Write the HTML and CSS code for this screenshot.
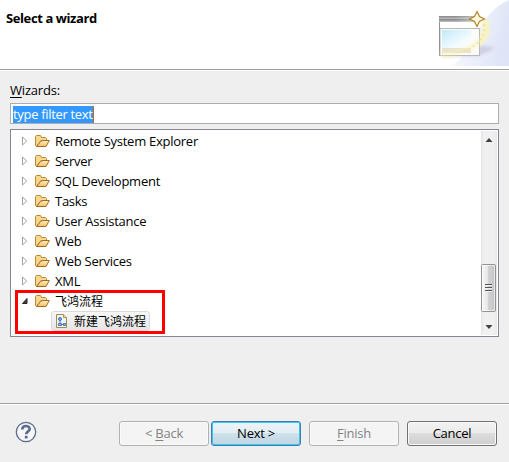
FILE: index.html
```
<!DOCTYPE html>
<html lang="en">
<head>
<meta charset="utf-8">
<title>Select a wizard</title>
<link rel="stylesheet" href="styles.css">
</head>
<body>
<svg class="defs" width="0" height="0" aria-hidden="true">
  <defs>
    <linearGradient id="fold" x1="0" y1="0" x2="0" y2="1"><stop offset="0" stop-color="#fff0c4"/><stop offset="1" stop-color="#f3c068"/></linearGradient>
    <symbol id="folder" viewBox="0 0 16 16">
      <path d="M1.500 12.500V3.500L2.500 2.500H6.500L7.500 4.500H11.500L12.500 5.500V7.500H7L2.500 13.500Z" fill="#f8d88f" stroke="#b98635"/>
      <path d="M2.500 13.500L6.500 8.500L9 7.500H15.300L12 13.500Z" fill="url(#fold)" stroke="#a66b22" stroke-linejoin="round"/>
    </symbol>
    <symbol id="closed" viewBox="0 0 6 10"><path d="M.5 1V9L4.700 5Z" fill="#fff" stroke="#a0a0a0"/></symbol>
  </defs>
</svg>
<header class="banner">
  <h1>Select a wizard</h1>
  <svg class="art" width="100" height="66" viewBox="0 0 100 66">
    <defs>
      <linearGradient id="sweep" x1="0" y1="0" x2="1" y2=".3"><stop offset="0" stop-color="#fff"/><stop offset=".55" stop-color="#eef1fb"/><stop offset="1" stop-color="#dfe5f7"/></linearGradient>
      <linearGradient id="bar" x1="0" y1="0" x2="0" y2="1"><stop offset="0" stop-color="#858585"/><stop offset=".45" stop-color="#b9b9b9"/><stop offset=".6" stop-color="#858585"/><stop offset="1" stop-color="#c5c5c5"/></linearGradient>
      <linearGradient id="fade" x1="0" y1="0" x2="1" y2="0"><stop offset=".4" stop-color="#fff" stop-opacity="0"/><stop offset="1" stop-color="#fff" stop-opacity=".5"/></linearGradient>
      <linearGradient id="sky" x1="0" y1="0" x2="1" y2="1"><stop offset="0" stop-color="#bfeafa"/><stop offset=".65" stop-color="#f2fbfe"/><stop offset="1" stop-color="#fff"/></linearGradient>
      <filter id="soft" x="-20%" y="-20%" width="140%" height="140%"><feGaussianBlur stdDeviation="1.500"/></filter>
    </defs>
    <path d="M42 66C64 55 68 13 100 0V66Z" fill="url(#sweep)"/>
    <path d="M30 57L71 56L86 48L74 45Z" fill="#bbb5cf" opacity=".5" filter="url(#soft)"/>
    <path d="M75 20C83 34 68 53 33 54" fill="none" stroke="#fbf6bd" stroke-width="7" opacity=".8" filter="url(#soft)"/>
    <rect x="30" y="16" width="41" height="40" fill="#fff"/>
    <rect x="30" y="16" width="41" height="6" fill="url(#bar)"/>
    <rect x="30" y="16" width="41" height="6" fill="url(#fade)"/>
    <rect x="31" y="28.500" width="39.500" height="27" fill="#fbfcf8" stroke="#b7b9b8"/>
    <path d="M30.500 22V56" stroke="#8e9296"/>
    <rect x="33" y="30" width="29" height="18" fill="url(#sky)"/>
    <rect x="33" y="48" width="29" height="5" fill="#e5e1d2"/>
    <path d="M76 22C82 36 68 51 31 54" fill="none" stroke="#f8f1b8" stroke-width="5" opacity=".5" filter="url(#soft)"/>
    <path d="M75 24C77 37 69 48 49 52" fill="none" stroke="#f7e2a0" stroke-width="2" stroke-dasharray="2 3"/>
    <path d="M68 11.500L70.500 16.500L75.500 19L70.500 21.500L68 26.500L65.500 21.500L60.500 19L65.500 16.500Z" fill="#fff9dc" stroke="#b5822b" stroke-width="1.200"/>
  </svg>
</header>
<main class="content">
  <label class="label" for="filter"><u>W</u>izards:</label>
  <div class="filter" id="filter"><span class="selected">type filter text</span></div>
  <div class="tree">
    <ul class="rows">
      <li><svg class="twist"><use href="#closed"/></svg><svg class="ico"><use href="#folder"/></svg><span>Remote System Explorer</span></li>
      <li><svg class="twist"><use href="#closed"/></svg><svg class="ico"><use href="#folder"/></svg><span>Server</span></li>
      <li><svg class="twist"><use href="#closed"/></svg><svg class="ico"><use href="#folder"/></svg><span>SQL Development</span></li>
      <li><svg class="twist"><use href="#closed"/></svg><svg class="ico"><use href="#folder"/></svg><span>Tasks</span></li>
      <li><svg class="twist"><use href="#closed"/></svg><svg class="ico"><use href="#folder"/></svg><span>User Assistance</span></li>
      <li><svg class="twist"><use href="#closed"/></svg><svg class="ico"><use href="#folder"/></svg><span>Web</span></li>
      <li><svg class="twist"><use href="#closed"/></svg><svg class="ico"><use href="#folder"/></svg><span>Web Services</span></li>
      <li><svg class="twist"><use href="#closed"/></svg><svg class="ico"><use href="#folder"/></svg><span>XML</span></li>
      <li><svg class="twist" viewBox="0 0 6 10"><path d="M5 2.500V7.500H.5Z" fill="#404040" stroke="#262626"/></svg><svg class="ico"><use href="#folder"/></svg><span class="cjk">飞鸿流程</span></li>
      <li class="child"><div class="pick">
        <svg class="doc" width="16" height="16" viewBox="0 0 16 16">
          <path d="M1.500 1.500H8.500L11.500 4.500V14.500H1.500Z" fill="#edf3fd" stroke="#a58c4d"/>
          <path d="M8.500 1.500V4.500H11.500" fill="#f4dfa4" stroke="#b5934b"/>
          <path d="M5 7V11.500H8" fill="none" stroke="#4a73b0"/>
          <circle cx="5" cy="6" r="1.500" fill="#85a9dc" stroke="#4a73b0"/>
          <path d="M3.500 10.500H6.500V12.500H3.500ZM8.500 10.500H10.500V12.500H8.500Z" fill="#a9c4eb" stroke="#4a73b0"/>
        </svg><span class="cjk">新建飞鸿流程</span></div></li>
    </ul>
    <div class="scroll">
      <svg width="16" height="204" viewBox="0 0 16 204">
        <defs><linearGradient id="thumb"><stop offset="0" stop-color="#fafafa"/><stop offset=".45" stop-color="#e6e6e8"/><stop offset=".5" stop-color="#d2d2d6"/><stop offset="1" stop-color="#c1c1c7"/></linearGradient></defs>
        <path d="M8 7L11.500 11H4.500Z" fill="#404040"/>
        <rect x=".5" y="133.500" width="14" height="47" rx="1" fill="url(#thumb)" stroke="#939393"/>
        <rect x="1.500" y="134.500" width="12" height="45" fill="none" stroke="#fff" opacity=".6"/>
        <path d="M4 153.500H11M4 156.500H11M4 159.500H11" stroke="#555"/>
        <path d="M4 154.500H11M4 157.500H11M4 160.500H11" stroke="#f0f0f0"/>
        <path d="M4.500 194H11.500L8 198Z" fill="#404040"/>
      </svg>
    </div>
    <div class="highlight"></div>
  </div>
</main>
<footer class="footer">
  <svg class="help" width="22" height="22" viewBox="0 0 22 22">
    <circle cx="11" cy="11" r="9.700" fill="#f6f6f7" stroke="#5c6c8c" stroke-width="1.300"/>
    <path d="M7.300 8.500C7.300 3.800 14.700 4 14.700 8C14.700 10.500 11.200 10.300 11.200 13.300" fill="none" stroke="#5b6d91" stroke-width="2.700"/>
    <rect x="9.700" y="14.800" width="3" height="2.800" rx="1" fill="#5b6d91"/>
  </svg>
  <div class="buttons">
    <button class="btn off back" disabled><span>&lt; <u>B</u>ack</span></button>
    <button class="btn next"><span>Next &gt;</span></button>
    <button class="btn off finish" disabled><span><u>F</u>inish</span></button>
    <button class="btn cancel"><span>Cancel</span></button>
  </div>
</footer>
</body>
</html>
```
FILE: styles.css
```
* { box-sizing: border-box; }
body { margin: 0; width: 509px; height: 462px; overflow: hidden; display: flex; flex-direction: column; background: #efefef; color: #000; font: 13px/20px "Open Sans", "Noto Sans CJK SC", sans-serif; letter-spacing: -.26px; }
.defs { position: absolute; }
u { text-decoration: underline; text-underline-offset: 2px; text-decoration-thickness: 1px; text-decoration-skip-ink: none; }
.banner { display: flex; justify-content: space-between; height: 71px; background: #fff; border-bottom: 1px solid #fff; box-shadow: inset 0 -1px #a0a0a0; }
h1 { margin: 8px 0 0 6px; font-size: 13px; line-height: 20px; font-weight: 700; letter-spacing: -.4px; }
.art { display: block; }
.content { height: 332px; padding: 9px 10px 0; }
.label { display: block; height: 23px; line-height: 20px; letter-spacing: -.2px; }
.filter { height: 21px; border: 1px solid #abadb3; background: #fff; padding: 2px; display: flex; }
.selected { height: 17px; line-height: 16px; letter-spacing: -.32px; color: #fff; background: #3399ff; border-right: 1px solid #cc6600; white-space: nowrap; }
.tree { position: relative; display: flex; justify-content: space-between; height: 208px; margin-top: 5px; padding: 1px 0 1px 1px; border: 1px solid #828790; background: #fff; }
.rows { list-style: none; margin: 0; padding: 0; }
.rows li { display: flex; align-items: center; height: 20px; padding-left: 10px; white-space: nowrap; }
.twist { width: 6px; height: 10px; margin-right: 6px; }
.ico { width: 16px; height: 16px; margin-right: 5px; }
.cjk { font: 12px/18px "Noto Sans CJK SC", sans-serif; letter-spacing: 0; }
.rows .child { padding-left: 39px; }
.pick { display: flex; align-items: center; height: 20px; width: 99px; padding-left: 3px; border: 1px solid #d9d9d9; border-radius: 3px; background: linear-gradient(#f8f8f8, #e5e5e5); }
.doc { margin-right: 3px; }
.scroll { width: 17px; height: 204px; background: linear-gradient(90deg, #e5e5e5, #f0f0f0 3px, #f0f0f0 13px, #e8e8e8 16px, #fff 16px); }
.scroll svg { display: block; }
.highlight { position: absolute; left: 4px; top: 160px; width: 150px; height: 44px; border: 3px solid #f00; }
.footer { flex: 1; display: flex; justify-content: space-between; align-items: flex-start; padding: 17px 12px 0 15px; border-top: 1px solid #a0a0a0; box-shadow: inset 0 1px #fff; }
.buttons { display: flex; }
.btn { width: 90px; height: 25px; padding: 0; font: inherit; letter-spacing: inherit; line-height: 23px; border: 1px solid #707070; border-radius: 3px; color: #000; background: linear-gradient(#f2f2f2, #ebebeb 50%, #dddddd 50%, #cfcfcf); box-shadow: inset 0 0 0 1px #fafafa; }
.next { margin: 0 8px 0 2px; border-color: #3c7fb1; background: linear-gradient(#eef4f7, #e2edf3 50%, #cfe1eb 50%, #bed5e3); box-shadow: inset 0 0 0 1px #38c5ef; }
.finish { margin-right: 8px; }
.off { color: #838383; border-color: #adb2b5; background: #f4f4f4; }
```
